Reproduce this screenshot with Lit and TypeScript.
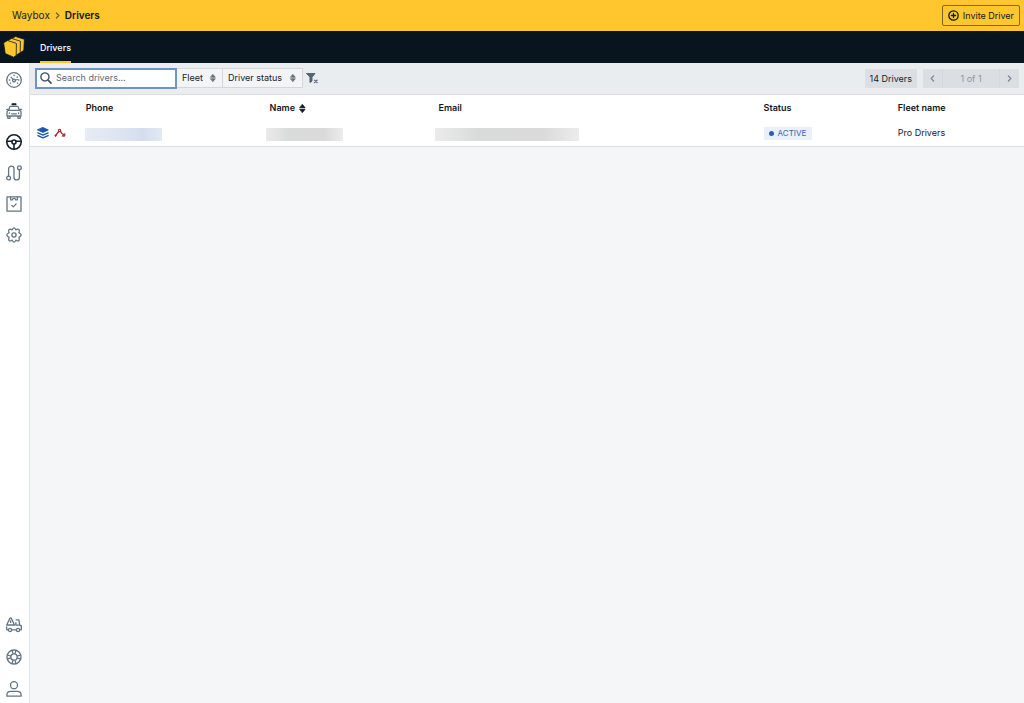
import { LitElement, html, css, svg } from "lit";
import { customElement } from "lit/decorators.js";

const icon = (body: unknown, size = 16, cls = "") =>
  html`<svg class=${cls} width=${size} height=${size} viewBox="0 0 16 16" fill="none" stroke="currentColor" stroke-width="1.3" stroke-linecap="round" stroke-linejoin="round" aria-hidden="true">${body}</svg>`;

const gauge = svg`<circle cx="8" cy="8" r="7.3"/><circle cx="8" cy="8.6" r="1.4"/><path d="M7 7.4 5.200 5.400M8 3.200v.5M11.400 5l-.3.300M3.300 8h.5M12.400 8h.5M4.300 11.200l.3-.2M11.700 11.200l-.3-.2M9.400 8.200l1.800-.7"/>`;
const taxi = svg`<path d="M6.200.9h3.600v.8H6.200z" fill="#17212b" stroke="#17212b"/><path d="M2.600 7.400 4 3.400h8l1.400 4M.7 6.400H2M14 6.400h1.300M1 13V9.400c0-1.200.8-2 2-2h10c1.200 0 2 .8 2 2V13zM1.800 13v2.300h2.200V13M12 13v2.300h2.200V13M5.600 10.800h4.800"/><path d="M3.400 10v.4M12.600 10v.4"/>`;
const wheel = svg`<g stroke-width="1.600"><circle cx="8" cy="8" r="7.200"/><circle cx="8" cy="8" r="2"/><path d="M1 7.200h5M10 7.200h5M8 10v5"/></g>`;
const route = svg`<circle cx="2.600" cy="13" r="1.900"/><circle cx="13.400" cy="2.800" r="1.900"/><path d="M2.600 11V3.800a2.700 2.700 0 0 1 5.400 0v8.400a2.700 2.700 0 0 0 5.400 0V4.800"/>`;
const clipboard = svg`<path d="M1 .9h14v14.300H1z"/><path d="M4.600 1v2.800h1.700c.2-.9.800-1.400 1.700-1.400s1.500.5 1.700 1.400h1.700V1M5.800 9.400l1.500 1.500 2.900-3"/>`;
const gear = svg`<circle cx="8" cy="8" r="2.100"/><path d="M6.500 2.200Q8-.6 9.500 2.200l.3.600 1.100-.4q2.900-.9 2.300 2.300l-.3 1 .9.600q2.700 1.700 0 3.400l-.9.600.3 1q.6 3.200-2.300 2.300l-1.100-.4-.3.600Q8 16.600 6.500 13.800l-.3-.6-1.100.4q-2.900.9-2.300-2.300l.3-1-.9-.6q-2.700-1.700 0-3.400l.9-.6-.3-1Q2.200 1.500 5.100 2.400l1.100.4z"/>`;
const truck = svg`<path d="M.7 8 3.900 1.400c.3-.6 1.100-.6 1.400 0L8.500 8zM4.600 4v1.400M.7 9.800v3h1.500M5.800 12.800h4.400M13.800 12.800h1.500V8.600l-1.600-.4-.8-5.400h-2.700M9.900 5.600v2.600h3.800"/><circle cx="4" cy="13" r="1.600"/><circle cx="12" cy="13" r="1.600"/>`;
const buoy = svg`<circle cx="8" cy="8" r="7"/><circle cx="8" cy="8" r="3.200"/><path d="M4.700 6.200 1.900 4.700M6.200 4.700 4.700 1.900M9.800 4.700l1.500-2.800M11.300 6.200l2.800-1.500M11.300 9.800l2.800 1.500M9.800 11.300l1.500 2.800M6.200 11.300l-1.500 2.800M4.700 9.800l-2.800 1.500" transform="rotate(45 8 8)"/>`;
const person = svg`<circle cx="8" cy="4.200" r="3.500"/><path d="M.9 15.200v-1.100c0-2.200 1.600-3.700 3.800-3.700h6.600c2.200 0 3.800 1.500 3.800 3.700v1.100z"/>`;

const search = svg`<circle cx="6.600" cy="6.600" r="5.400" stroke-width="1.900"/><path d="m10.800 10.800 3.900 3.900" stroke-width="2.400"/>`;
const carets = svg`<path d="M8 1 12.600 6.600H3.400zM8 15l4.600-5.600H3.400z" fill="currentColor"/>`;
const chevron = svg`<path d="m6 3.500 4.500 4.500L6 12.500" stroke-width="2.200"/>`;
const chevronLeft = svg`<path d="M10 3.500 5.500 8l4.500 4.500" stroke-width="2.200"/>`;
const plus = svg`<circle cx="8" cy="8" r="6.800" stroke-width="1.900"/><path d="M8 5v6M5 8h6" stroke-width="1.900"/>`;
const clearFilter = svg`<path d="M1 2h11L8 7v5.200l-2.700 1.800V7z" fill="currentColor"/><path d="m11.400 10.800 3.400 3.400M14.800 10.800l-3.400 3.400" stroke-width="1.700"/>`;
const layers = svg`<path d="m8 .8 7 3.200-7 3.200L1 4z" fill="currentColor"/><path d="m1.200 7.800 6.800 3.100 6.800-3.100M1.200 11.400 8 14.500l6.800-3.100" stroke-width="1.800"/>`;
const trip = svg`<path d="M2 11.600 6.200 6M8.800 5.800l1.400 2.600 2.800 2" stroke-width="1.800"/><circle cx="7.400" cy="4.600" r="1.500" stroke-width="1.600"/><circle cx="2" cy="11.600" r=".8" fill="currentColor"/><path d="M14.400 9.200v3h-3z" fill="currentColor"/>`;

@customElement("app-root")
export class AppRoot extends LitElement {
  static styles = css`
    :host { display: flex; flex-direction: column; min-height: 100vh; background: #f4f6f8; color: #17212b; font: 9px/12px Inter, "Liberation Sans", sans-serif; }
    * { box-sizing: border-box; }
    svg { display: block; flex: none; }
    a { color: inherit; text-decoration: none; }
    button, input, select { font: inherit; color: inherit; margin: 0; border-radius: 0; }
    .top { display: flex; align-items: center; justify-content: space-between; height: 31px; padding: 0 4px 0 12px; background: #ffc62e; }
    .crumbs { display: flex; align-items: center; gap: 3px; padding-bottom: 1px; font-size: 10px; line-height: 14px; }
    .crumbs svg { color: #6b5d35; }
    .crumbs strong { font-weight: 600; color: #10161a; }
    .invite { display: flex; align-items: center; gap: 4px; height: 21px; padding: 0 5px; border: 1px solid #80651f; border-radius: 2px; background: none; color: #10161a; }
    .bar { display: flex; align-items: stretch; height: 32px; background: #08151e; }
    .brand { width: 40px; padding: 5px 3px; }
    .tab { display: flex; align-items: center; border-bottom: 2px solid #ffc62e; padding-top: 3px; color: #fff; font-weight: 500; }
    .body { display: flex; flex: 1; }
    .side { display: flex; flex-direction: column; justify-content: space-between; width: 30px; padding: 9px 1px 6px 0; background: #fff; border-right: 1px solid #dfe3e6; color: #627584; }
    .group { display: flex; flex-direction: column; align-items: center; gap: 15px; }
    .group.low { gap: 16px; }
    .current { color: #17212b; }
    main { flex: 1; min-width: 0; }
    .tools { display: flex; align-items: center; justify-content: space-between; height: 32px; padding: 0 5px 1px; background: #e9edf0; border-bottom: 1px solid #dadee1; }
    .filters, .pages { display: flex; align-items: center; }
    .search { display: flex; align-items: center; gap: 4px; width: 142px; height: 21px; padding: 0 3px; background: #fff; border: 2px solid #6f93c8; color: #46566a; }
    .search input { width: 100%; min-width: 0; border: 0; padding: 0; background: none; outline: none; }
    .search input::placeholder { color: #5c6b79; opacity: 1; }
    .pick { display: flex; align-items: center; position: relative; height: 20px; border: 1px solid #d3d7db; border-left: 0; background: #f2f4f5; }
    .pick select { appearance: none; height: 18px; border: 0; background: none; padding: 0 19px 0 5px; outline: none; }
    .pick svg { position: absolute; right: 5px; color: #5c6b79; pointer-events: none; }
    .clear { border: 0; background: none; padding: 0; margin-left: 3px; color: #536477; }
    .count { height: 19px; padding: 0 5px; line-height: 19px; background: #dbdfe3; border-radius: 1px; margin-right: 6px; }
    .pager { display: flex; height: 19px; background: #dbdfe3; border-radius: 1px; color: #8b96a2; line-height: 19px; }
    .pager button { display: flex; align-items: center; justify-content: center; width: 19px; padding: 0; border: 0; background: none; color: #7d8995; }
    .pager span { width: 58px; text-align: center; border: solid #d3d8dd; border-width: 0 1px; }
    table { width: 100%; table-layout: fixed; border-collapse: collapse; background: #fff; border-bottom: 1px solid #dcdfe1; }
    th, td { padding: 0 6px; text-align: left; white-space: nowrap; }
    th { height: 26px; font-weight: 600; color: #10161a; }
    td { height: 25px; }
    .sort { display: flex; align-items: center; gap: 3px; padding: 0; border: 0; background: none; }
    .c-icons { width: 5%; } .c-phone { width: 18.5%; } .c-name { width: 17%; }
    .c-email { width: 32.7%; } .c-status { width: 13.5%; }
    .acts { display: flex; gap: 5px; padding-left: 1px; color: #1d57a8; }
    .acts .trip { color: #b3262f; }
    td.masked { padding: 2px 2px 0; }
    td.masked.phone { padding-left: 5px; }
    .mask { display: block; height: 13px; width: 77px; background: linear-gradient(90deg, #ebebeb, #d9dada 30%, #dadada 75%, #ececec); }
    .mask.blue { background: linear-gradient(90deg, #e7ecf6, #dde5f1 45%, #d3deed 75%, #e2e9f4); }
    .mask.wide { width: 144px; }
    .tag { display: inline-flex; align-items: center; gap: 4px; height: 13px; padding: 0 6px 0 5px; background: #e8f0f9; color: #3767ad; font-size: 8px; }
    .dot { width: 5px; height: 5px; border-radius: 50%; background: #2b5fb0; }
  `;

  render() {
    return html`
      <header class="top">
        <nav class="crumbs"><a href="#">Waybox</a>${icon(chevron, 9)}<strong>Drivers</strong></nav>
        <button class="invite">${icon(plus, 11)}Invite Driver</button>
      </header>
      <div class="bar">
        <a class="brand" href="#" aria-label="Home">
          <svg width="22" height="22" viewBox="0 0 22 22" fill="#ffc62e" stroke="#08151e" stroke-width=".8" stroke-linejoin="round" aria-hidden="true">
            <path d="M8.800 2.600 12.600.5 21.400 3.300 20.800 14.200 17 17z"/>
            <path d="M4.800 4.600 8.600 2.400 17.400 5.200 17.200 16.800 13 19.200z"/>
            <path d="M.6 6.800 4.600 4.500 13.400 7.400 13.200 19.400 10.600 21.200 2.200 17.600z"/>
          </svg>
        </a>
        <a class="tab" href="#">Drivers</a>
      </div>
      <div class="body">
        <nav class="side">
          <div class="group">
            <a href="#" aria-label="Dashboard">${icon(gauge)}</a>
            <a href="#" aria-label="Vehicles">${icon(taxi)}</a>
            <a href="#" aria-label="Drivers" class="current">${icon(wheel)}</a>
            <a href="#" aria-label="Routes">${icon(route)}</a>
            <a href="#" aria-label="Tasks">${icon(clipboard)}</a>
            <a href="#" aria-label="Settings">${icon(gear)}</a>
          </div>
          <div class="group low">
            <a href="#" aria-label="Incidents">${icon(truck)}</a>
            <a href="#" aria-label="Help">${icon(buoy)}</a>
            <a href="#" aria-label="Account">${icon(person)}</a>
          </div>
        </nav>
        <main>
          <div class="tools">
            <div class="filters">
              <label class="search">${icon(search, 12)}<input type="text" aria-label="Search drivers" placeholder="Search drivers..." /></label>
              <label class="pick"><select aria-label="Fleet"><option>Fleet</option></select>${icon(carets, 8)}</label>
              <label class="pick"><select aria-label="Driver status"><option>Driver status</option></select>${icon(carets, 8)}</label>
              <button class="clear" aria-label="Clear filters">${icon(clearFilter, 12)}</button>
            </div>
            <div class="pages">
              <div class="count">14 Drivers</div>
              <div class="pager">
                <button aria-label="Previous page">${icon(chevronLeft, 9)}</button>
                <span>1 of 1</span>
                <button aria-label="Next page">${icon(chevron, 9)}</button>
              </div>
            </div>
          </div>
          <table>
            <thead>
              <tr>
                <th class="c-icons"></th>
                <th class="c-phone">Phone</th>
                <th class="c-name"><button class="sort">Name ${icon(carets, 9)}</button></th>
                <th class="c-email">Email</th>
                <th class="c-status">Status</th>
                <th>Fleet name</th>
              </tr>
            </thead>
            <tbody>
              <tr>
                <td><div class="acts"><a href="#" aria-label="Layers">${icon(layers, 12)}</a><a href="#" class="trip" aria-label="Trips">${icon(trip, 12)}</a></div></td>
                <td class="masked phone"><span class="mask blue"></span></td>
                <td class="masked"><span class="mask"></span></td>
                <td class="masked"><span class="mask wide"></span></td>
                <td><span class="tag"><i class="dot"></i>ACTIVE</span></td>
                <td>Pro Drivers</td>
              </tr>
            </tbody>
          </table>
        </main>
      </div>
    `;
  }
}
